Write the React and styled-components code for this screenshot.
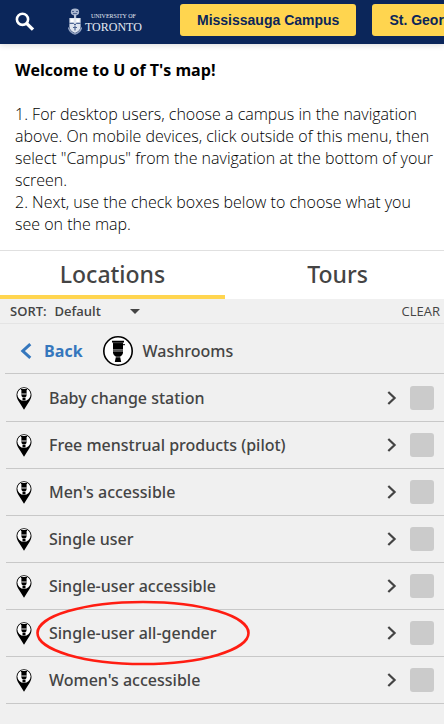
import React from 'react';
import { useState } from 'react';
import styled, { createGlobalStyle } from 'styled-components';

const washrooms = [
  { id: 'baby', name: 'Baby change station' },
  { id: 'menstrual', name: 'Free menstrual products (pilot)' },
  { id: 'mens', name: "Men's accessible" },
  { id: 'single', name: 'Single user' },
  { id: 'single-accessible', name: 'Single-user accessible' },
  { id: 'all-gender', name: 'Single-user all-gender', circled: true },
  { id: 'womens', name: "Women's accessible" },
];

const SearchIcon = () => (
  <svg width="20" height="20" viewBox="0 0 20 20" fill="none" stroke="#fff" aria-hidden="true">
    <circle cx="7.5" cy="7.3" r="5.6" strokeWidth="2.6" />
    <path d="M11.6 11.4L18 17.6" strokeWidth="3.4" />
  </svg>
);

const Crest = () => (
  <svg width="14" height="28" viewBox="0 0 14 28" aria-hidden="true">
    <ellipse cx="7" cy="4" rx="4.2" ry="3.4" fill="#a9b6cf" />
    <path d="M4 3.5h2M8 3.5h2M5 5.6h4" stroke="#4d6491" strokeWidth="1" />
    <path d="M6 6.5h2.2v3.5H6z" fill="#b9c4d9" />
    <path d="M1.4 10h11.2v8.5q0 4-5.6 6.5q-5.6-2.5-5.6-6.5z" fill="#dfe5ef" />
    <path d="M2.6 11.3h3v2.7h-3zM8.4 11.3h3v2.7h-3z" fill="#fff" />
    <path d="M1.4 15.3h4l1.6 1.5l1.6-1.5h4" stroke="#29457d" strokeWidth="1" fill="none" />
    <path d="M5 19.5h4M7 17.5v5" stroke="#4d6491" strokeWidth="1.2" />
    <path d="M.5 19.5q1 5 6.5 6.5q5.5-1.5 6.5-6.5" stroke="#8d9dbd" strokeWidth="1.5" fill="none" />
  </svg>
);

const WashroomIcon = () => (
  <svg width="30" height="30" viewBox="0 0 30 30" aria-hidden="true">
    <circle cx="15" cy="15" r="14.2" fill="#fff" stroke="#000" strokeWidth="1.6" />
    <path d="M9 4.8h12v1.6H9zM10 6.4h10v6.8H10z" fill="#000" />
    <path d="M9.3 6.7h11.4" stroke="#777" strokeWidth=".6" />
    <path d="M19 8.7h3" stroke="#000" strokeWidth="1" />
    <path d="M10 13.2h10v2.3H10z" fill="#555" />
    <path d="M10 15.5h10v1.5q-.6 3-3 3.7h-4q-2.4-.7-3-3.7z" fill="#000" />
    <path d="M12.8 21.3h4.4l1 4.7h-6.4z" fill="#000" />
  </svg>
);

const PinIcon = () => (
  <svg width="16" height="23" viewBox="0 0 16 23" aria-hidden="true">
    <path d="M8 .2a7.5 7.5 0 0 1 7.5 7.5c0 2.500-.8 4.300-2 6.300L8 22.800L2.500 14c-1.200-2-2-3.800-2-6.300A7.500 7.500 0 0 1 8 .2z" fill="#000" />
    <ellipse cx="8" cy="7.500" rx="6.600" ry="6.400" fill="#fff" />
    <path d="M5 2h6v1H5zM5.400 3h5.200v3.500H5.400z" fill="#000" />
    <path d="M5.200 6.500h5.600v1.200H5.200z" fill="#666" />
    <path d="M5.300 7.700h5.400q-.2 2.300-1.500 2.600H6.800q-1.300-.3-1.500-2.600zM6.500 10.800h3v2.800h-3z" fill="#000" />
  </svg>
);

const LocationRow = ({ item, checked, onToggle }) => (
  <Row>
    <PinIcon />
    <RowLabel htmlFor={item.id}>
      {item.name}
      {item.circled && (
        <Marker viewBox="0 0 214 66" aria-hidden="true">
          <ellipse cx="107" cy="33" rx="105.5" ry="31" fill="none" stroke="#ff1d12" strokeWidth="2.6" />
        </Marker>
      )}
    </RowLabel>
    <MoreButton aria-label={`Show ${item.name}`}>
      <svg width="10" height="14" viewBox="0 0 10 14" fill="none" stroke="#444" strokeWidth="2.2">
        <path d="M1.3 1L7.6 7L1.3 13" />
      </svg>
    </MoreButton>
    <Checkbox id={item.id} type="checkbox" checked={checked} onChange={onToggle} />
  </Row>
);

const App = () => {
  const [selected, setSelected] = useState([]);

  let handleToggle = (id) => {
    setSelected(selected.includes(id) ? selected.filter((each) => each !== id) : [...selected, id]);
  };

  return (
    <Page>
      <GlobalStyle />
      <Header>
        <SearchButton aria-label="Search"><SearchIcon /></SearchButton>
        <Logo href="#" aria-label="University of Toronto">
          <Crest />
          <LogoText>
            <LogoSmall>UNIVERSITY OF</LogoSmall>
            <LogoLarge>TORONTO</LogoLarge>
          </LogoText>
        </Logo>
        <Campuses>
          <CampusButton>Mississauga Campus</CampusButton>
          <CampusButton>St. George Campus</CampusButton>
        </Campuses>
      </Header>

      <Welcome>
        <WelcomeTitle>Welcome to U of T's map!</WelcomeTitle>
        <p>
          1. For desktop users, choose a campus in the navigation above. On mobile devices,
          click outside of this menu, then select "Campus" from the navigation at the bottom
          of your screen.
        </p>
        <p>2. Next, use the check boxes below to choose what you see on the map.</p>
      </Welcome>

      <Tabs role="tablist">
        <Tab role="tab" aria-selected="true" $active>Locations</Tab>
        <Tab role="tab" aria-selected="false">Tours</Tab>
      </Tabs>

      <SortBar>
        <SortLabel htmlFor="sort">SORT:</SortLabel>
        <SortBox>
          <SortSelect id="sort" defaultValue="default">
            <option value="default">Default</option>
            <option value="name">Name</option>
          </SortSelect>
          <svg width="10" height="5" viewBox="0 0 10 5" aria-hidden="true">
            <path d="M0 0h10L5 5z" fill="#444" />
          </svg>
        </SortBox>
        <ClearButton onClick={() => setSelected([])}>CLEAR</ClearButton>
      </SortBar>

      <Category>
        <BackButton>
          <svg width="12" height="16" viewBox="0 0 12 16" fill="none" stroke="#3577bd" strokeWidth="3">
            <path d="M10.3 1.2L2.8 8L10.3 14.8" />
          </svg>
          Back
        </BackButton>
        <WashroomIcon />
        <CategoryName>Washrooms</CategoryName>
      </Category>

      <List>
        {washrooms.map((item) => (
          <LocationRow
            key={item.id}
            item={item}
            checked={selected.includes(item.id)}
            onToggle={() => handleToggle(item.id)}
          />
        ))}
      </List>
    </Page>
  );
};

const GlobalStyle = createGlobalStyle`
  * {
    box-sizing: border-box;
  }
  body {
    margin: 0;
    background: #f0f0f0;
    color: #444;
    font-family: "Open Sans", "Noto Sans", sans-serif;
  }
  p, h1, h2, ul {
    margin: 0;
    padding: 0;
  }
  button {
    padding: 0;
    border: 0;
    background: none;
    color: inherit;
    font-family: inherit;
    cursor: pointer;
  }
  svg {
    display: block;
    flex: none;
  }
`

const Page = styled.div`
  overflow: hidden;
`

const Header = styled.header`
  height: 44px;
  padding-left: 15px;
  display: flex;
  align-items: center;
  background: #0b265a;
  box-shadow: 0 1px 6px rgba(0, 0, 0, 0.15);
  position: relative;
  overflow-x: clip;
`

const SearchButton = styled.button`
  flex: none;
`

const Logo = styled.a`
  margin-left: 33px;
  width: 112px;
  flex: none;
  display: flex;
  align-items: center;
  gap: 3px;
  color: #e4e9f2;
  text-decoration: none;
  font-family: "Liberation Serif", serif;
`

const LogoText = styled.span`
  display: flex;
  flex-direction: column;
  align-items: flex-end;
  padding-top: 3px;
`

const LogoSmall = styled.span`
  font-size: 6px;
  line-height: 7px;
  padding-right: 6px;
`

const LogoLarge = styled.span`
  font-size: 12px;
  line-height: 14px;
`

const Campuses = styled.nav`
  display: flex;
  gap: 16px;
  padding-bottom: 4px;
`

const CampusButton = styled.button`
  && {
    height: 32px;
    padding: 0 17px;
    flex: none;
    border-radius: 3px;
    background: #ffd54f;
    color: #0b265a;
    font: bold 14px "Liberation Sans", sans-serif;
    white-space: nowrap;
  }
`

const Welcome = styled.section`
  padding: 15px 10px 15px 15px;
  background: #fff;
  color: #000;
  font-size: 16px;
  font-weight: 300;
  line-height: 22px;
  border-bottom: 1px solid #e0e0e0;
`

const WelcomeTitle = styled.h1`
  font-size: 16px;
  font-weight: 700;
  line-height: 22px;
  margin-bottom: 22px;
`

const Tabs = styled.div`
  display: grid;
  grid-template-columns: 1fr 1fr;
  margin-right: -6px;
  background: #fff;
`

const Tab = styled.button`
  height: 48px;
  padding-top: 2px;
  border-bottom: 4px solid ${({ $active }) => ($active ? '#ffd54f' : 'transparent')};
  font-family: "Noto Sans", sans-serif;
  font-size: 23px;
  font-weight: 500;
  line-height: 40px;
`

const SortBar = styled.div`
  height: 25px;
  padding: 0 4px 0 10px;
  display: flex;
  align-items: center;
  font-size: 13px;
  border-bottom: 1px solid #e4e4e4;
`

const SortLabel = styled.label`
  font-weight: 600;
`

const SortBox = styled.span`
  display: flex;
  align-items: center;
  padding-left: 8px;
`

const SortSelect = styled.select`
  width: 75px;
  padding: 0;
  border: 0;
  appearance: none;
  background: none;
  color: inherit;
  font: 600 13px "Open Sans", sans-serif;
`

const ClearButton = styled.button`
  margin-left: auto;
  font-size: 13px;
  font-weight: 500;
`

const Category = styled.div`
  height: 50px;
  margin-left: 5px;
  padding: 4px 0 0 15px;
  display: flex;
  align-items: center;
  border-bottom: 1px solid #c8c8c8;
`

const BackButton = styled.button`
  display: flex;
  align-items: center;
  gap: 12px;
  margin-right: 20px;
  color: #3577bd;
  font-size: 16px;
  font-weight: 700;
`

const CategoryName = styled.h2`
  margin-left: 10px;
  font-family: "Noto Sans", sans-serif;
  font-size: 16px;
  font-weight: 500;
`

const List = styled.ul`
  padding-top: 1px;
  list-style: none;
`

const Row = styled.li`
  height: 47px;
  margin-left: 6px;
  padding: 0 10px;
  display: flex;
  align-items: center;
  border-bottom: 1px solid #c8c8c8;
`

const RowLabel = styled.label`
  position: relative;
  margin-left: 17px;
  font-family: "Noto Sans", sans-serif;
  font-size: 16px;
  font-weight: 500;
`

const Marker = styled.svg`
  position: absolute;
  top: -22px;
  left: -13px;
  width: 214px;
  height: 66px;
  pointer-events: none;
`

const MoreButton = styled.button`
  margin-left: auto;
  margin-right: 13px;
`

const Checkbox = styled.input`
  appearance: none;
  width: 24px;
  height: 24px;
  margin: 0;
  border-radius: 3px;
  background: #cbcbcb;

  &:checked {
    background: #3577bd;
  }
`

export default App;
